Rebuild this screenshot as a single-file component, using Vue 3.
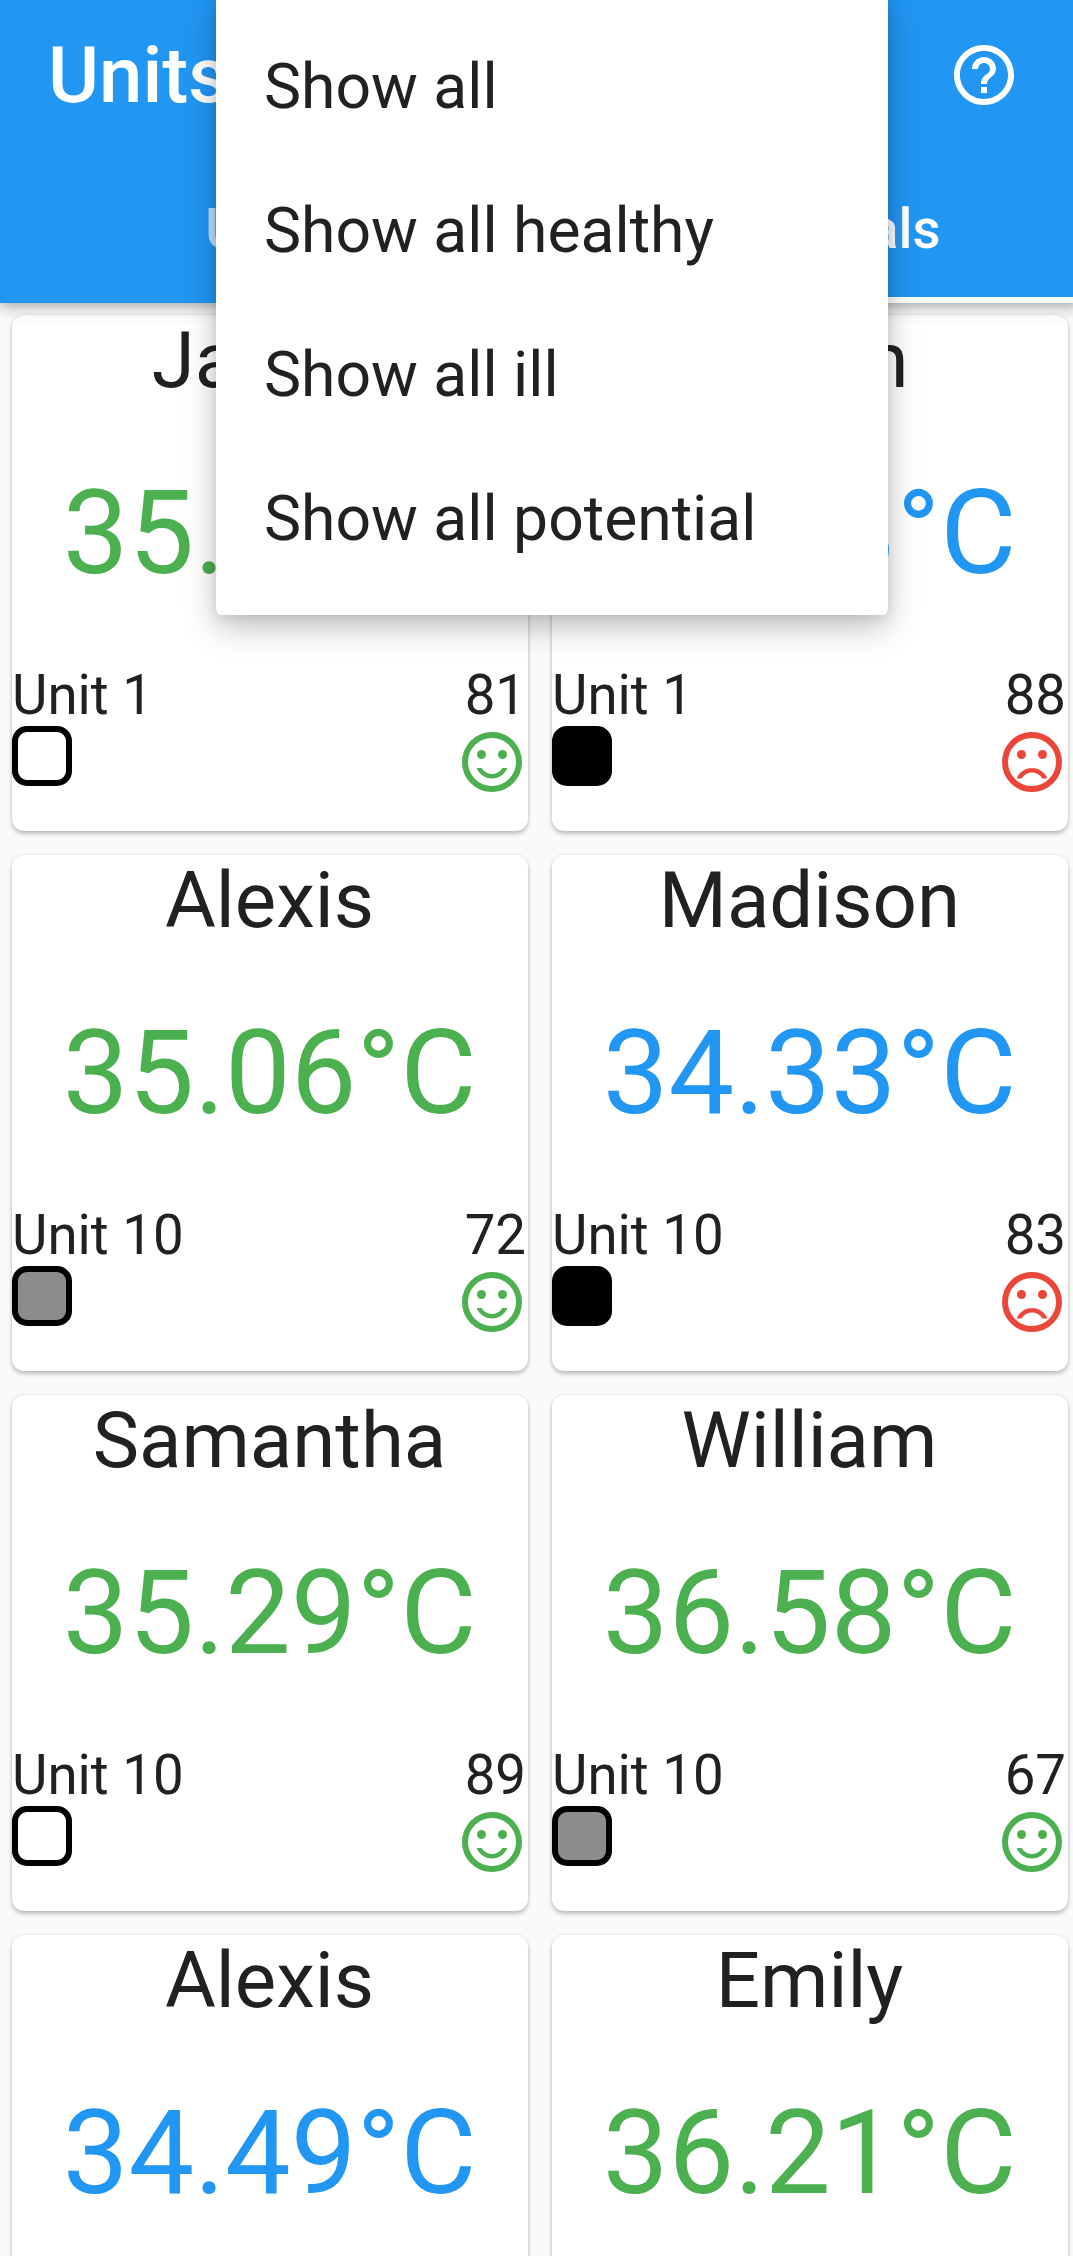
<script setup>
const menuItems = ['Show all', 'Show all healthy', 'Show all ill', 'Show all potential']

const animals = [
  { name: 'James', temp: '35.12', level: 'normal', unit: 'Unit 1', score: 81, mark: 'empty', happy: true },
  { name: 'Ethan', temp: '34.23', level: 'low', unit: 'Unit 1', score: 88, mark: 'full', happy: false },
  { name: 'Alexis', temp: '35.06', level: 'normal', unit: 'Unit 10', score: 72, mark: 'half', happy: true },
  { name: 'Madison', temp: '34.33', level: 'low', unit: 'Unit 10', score: 83, mark: 'full', happy: false },
  { name: 'Samantha', temp: '35.29', level: 'normal', unit: 'Unit 10', score: 89, mark: 'empty', happy: true },
  { name: 'William', temp: '36.58', level: 'normal', unit: 'Unit 10', score: 67, mark: 'half', happy: true },
  { name: 'Alexis', temp: '34.49', level: 'low' },
  { name: 'Emily', temp: '36.21', level: 'normal' },
]

const mouths = {
  up: 'M12 16c-1.48 0-2.75-.81-3.45-2H6.88c.8 2.05 2.79 3.5 5.12 3.5s4.32-1.45 5.12-3.5h-1.67c-.7 1.19-1.97 2-3.45 2z',
  down: 'M12 14c-2.33 0-4.32 1.45-5.12 3.5h1.67c.69-1.19 1.97-2 3.45-2s2.75.81 3.45 2h1.67c-.8-2.05-2.79-3.5-5.12-3.5z',
}
</script>

<template>
  <div class="screen">
    <header class="appbar">
      <div class="toolbar">
        <h1 class="title">Units</h1>
        <svg class="help" viewBox="0 0 24 24" fill="#fff">
          <path d="M11 18h2v-2h-2v2zm1-16C6.48 2 2 6.48 2 12s4.48 10 10 10 10-4.480 10-10S17.520 2 12 2zm0 18c-4.410 0-8-3.590-8-8s3.590-8 8-8 8 3.590 8 8-3.590 8-8 8zm0-14c-2.210 0-4 1.790-4 4h2c0-1.100.9-2 2-2s2 .9 2 2c0 2-3 1.750-3 5h2c0-2.250 3-2.500 3-5 0-2.210-1.790-4-4-4z" />
        </svg>
      </div>
      <nav class="tabs">
        <span class="tab">Units</span>
        <span class="tab active">Individuals</span>
      </nav>
    </header>

    <main class="grid">
      <article v-for="(a, i) in animals" :key="i" class="card">
        <h2 class="name">{{ a.name }}</h2>
        <p class="temp" :class="a.level">{{ a.temp }}°C</p>
        <template v-if="a.unit">
          <div class="row info">
            <span>{{ a.unit }}</span>
            <span>{{ a.score }}</span>
          </div>
          <div class="row">
            <span class="mark" :class="a.mark"></span>
            <svg class="face" :class="{ sad: !a.happy }" viewBox="0 0 24 24">
              <circle class="ring" cx="12" cy="12" r="9" />
              <circle cx="8.5" cy="9.5" r="1.5" />
              <circle cx="15.5" cy="9.5" r="1.5" />
              <path :d="a.happy ? mouths.up : mouths.down" />
            </svg>
          </div>
        </template>
      </article>
    </main>

    <ul class="menu">
      <li v-for="item in menuItems" :key="item">{{ item }}</li>
    </ul>
  </div>
</template>

<style>
body {
  margin: 0;
  background: #fafafa;
}
</style>

<style scoped>
.screen {
  position: relative;
  width: 100%;
  height: 2256px;
  overflow: hidden;
  background: #fafafa;
  color: #212121;
  font-family: Roboto, "Liberation Sans", sans-serif;
}
.appbar {
  position: relative;
  z-index: 1;
  width: 1080px;
  height: 303px;
  background: #2196f3;
  color: #fff;
  box-shadow: 0 6px 14px rgba(0, 0, 0, 0.22), 0 2px 6px rgba(0, 0, 0, 0.1);
}
.toolbar {
  display: flex;
  align-items: center;
  justify-content: space-between;
  box-sizing: border-box;
  height: 150px;
  padding: 0 60px 0 48px;
}
.title {
  margin: 0;
  padding-top: 2px;
  font-size: 78px;
  font-weight: 500;
  line-height: 92px;
}
.help {
  width: 72px;
  height: 72px;
}
.tabs {
  display: flex;
  margin-top: 9px;
  height: 144px;
}
.tab {
  flex: 1;
  box-sizing: border-box;
  padding: 1px 3px 0 0;
  border-bottom: 6px solid transparent;
  text-align: center;
  font-size: 54.6px;
  font-weight: 500;
  line-height: 138px;
  color: rgba(255, 255, 255, 0.7);
}
.tab.active {
  color: #fff;
  border-bottom-color: #fff;
}
.grid {
  display: grid;
  grid-template-columns: 516px 516px;
  grid-auto-rows: 516px;
  gap: 24px;
  width: 1080px;
  box-sizing: border-box;
  padding: 12px;
}
.card {
  display: flex;
  flex-direction: column;
  border-radius: 12px;
  background: #fff;
  box-shadow: 0 3px 4px rgba(0, 0, 0, 0.22), 0 0 3px rgba(0, 0, 0, 0.12);
}
.name {
  margin: 0;
  padding-right: 1px;
  text-align: center;
  font-size: 78px;
  font-weight: 400;
  line-height: 91px;
}
.temp {
  margin: 59px 0 61px;
  padding-right: 1px;
  text-align: center;
  font-size: 117px;
  line-height: 137px;
}
.temp.normal {
  color: #4caf50;
}
.temp.low {
  color: #2196f3;
}
.row {
  display: flex;
  align-items: flex-start;
  justify-content: space-between;
}
.info {
  height: 63px;
  padding-right: 2px;
  font-size: 54.6px;
  line-height: 64px;
}
.mark {
  box-sizing: border-box;
  width: 60px;
  height: 60px;
  border: 6px solid #000;
  border-radius: 15px;
}
.mark.half {
  background: #8c8c8c;
}
.mark.full {
  background: #000;
}
.face {
  width: 72px;
  height: 72px;
  fill: #4caf50;
  stroke: #4caf50;
  stroke-width: 0;
}
.face.sad {
  fill: #ea463a;
  stroke: #ea463a;
}
.face .ring {
  fill: none;
  stroke-width: 2;
}
.menu {
  position: absolute;
  z-index: 2;
  top: -9px;
  left: 216px;
  box-sizing: border-box;
  width: 672px;
  margin: 0;
  padding: 24px 0;
  list-style: none;
  border-radius: 6px;
  background: #fff;
  box-shadow: 0 12px 32px rgba(0, 0, 0, 0.26), 0 2px 10px rgba(0, 0, 0, 0.08);
}
.menu li {
  padding: 0 48px;
  font-size: 62.4px;
  line-height: 144px;
}
</style>
